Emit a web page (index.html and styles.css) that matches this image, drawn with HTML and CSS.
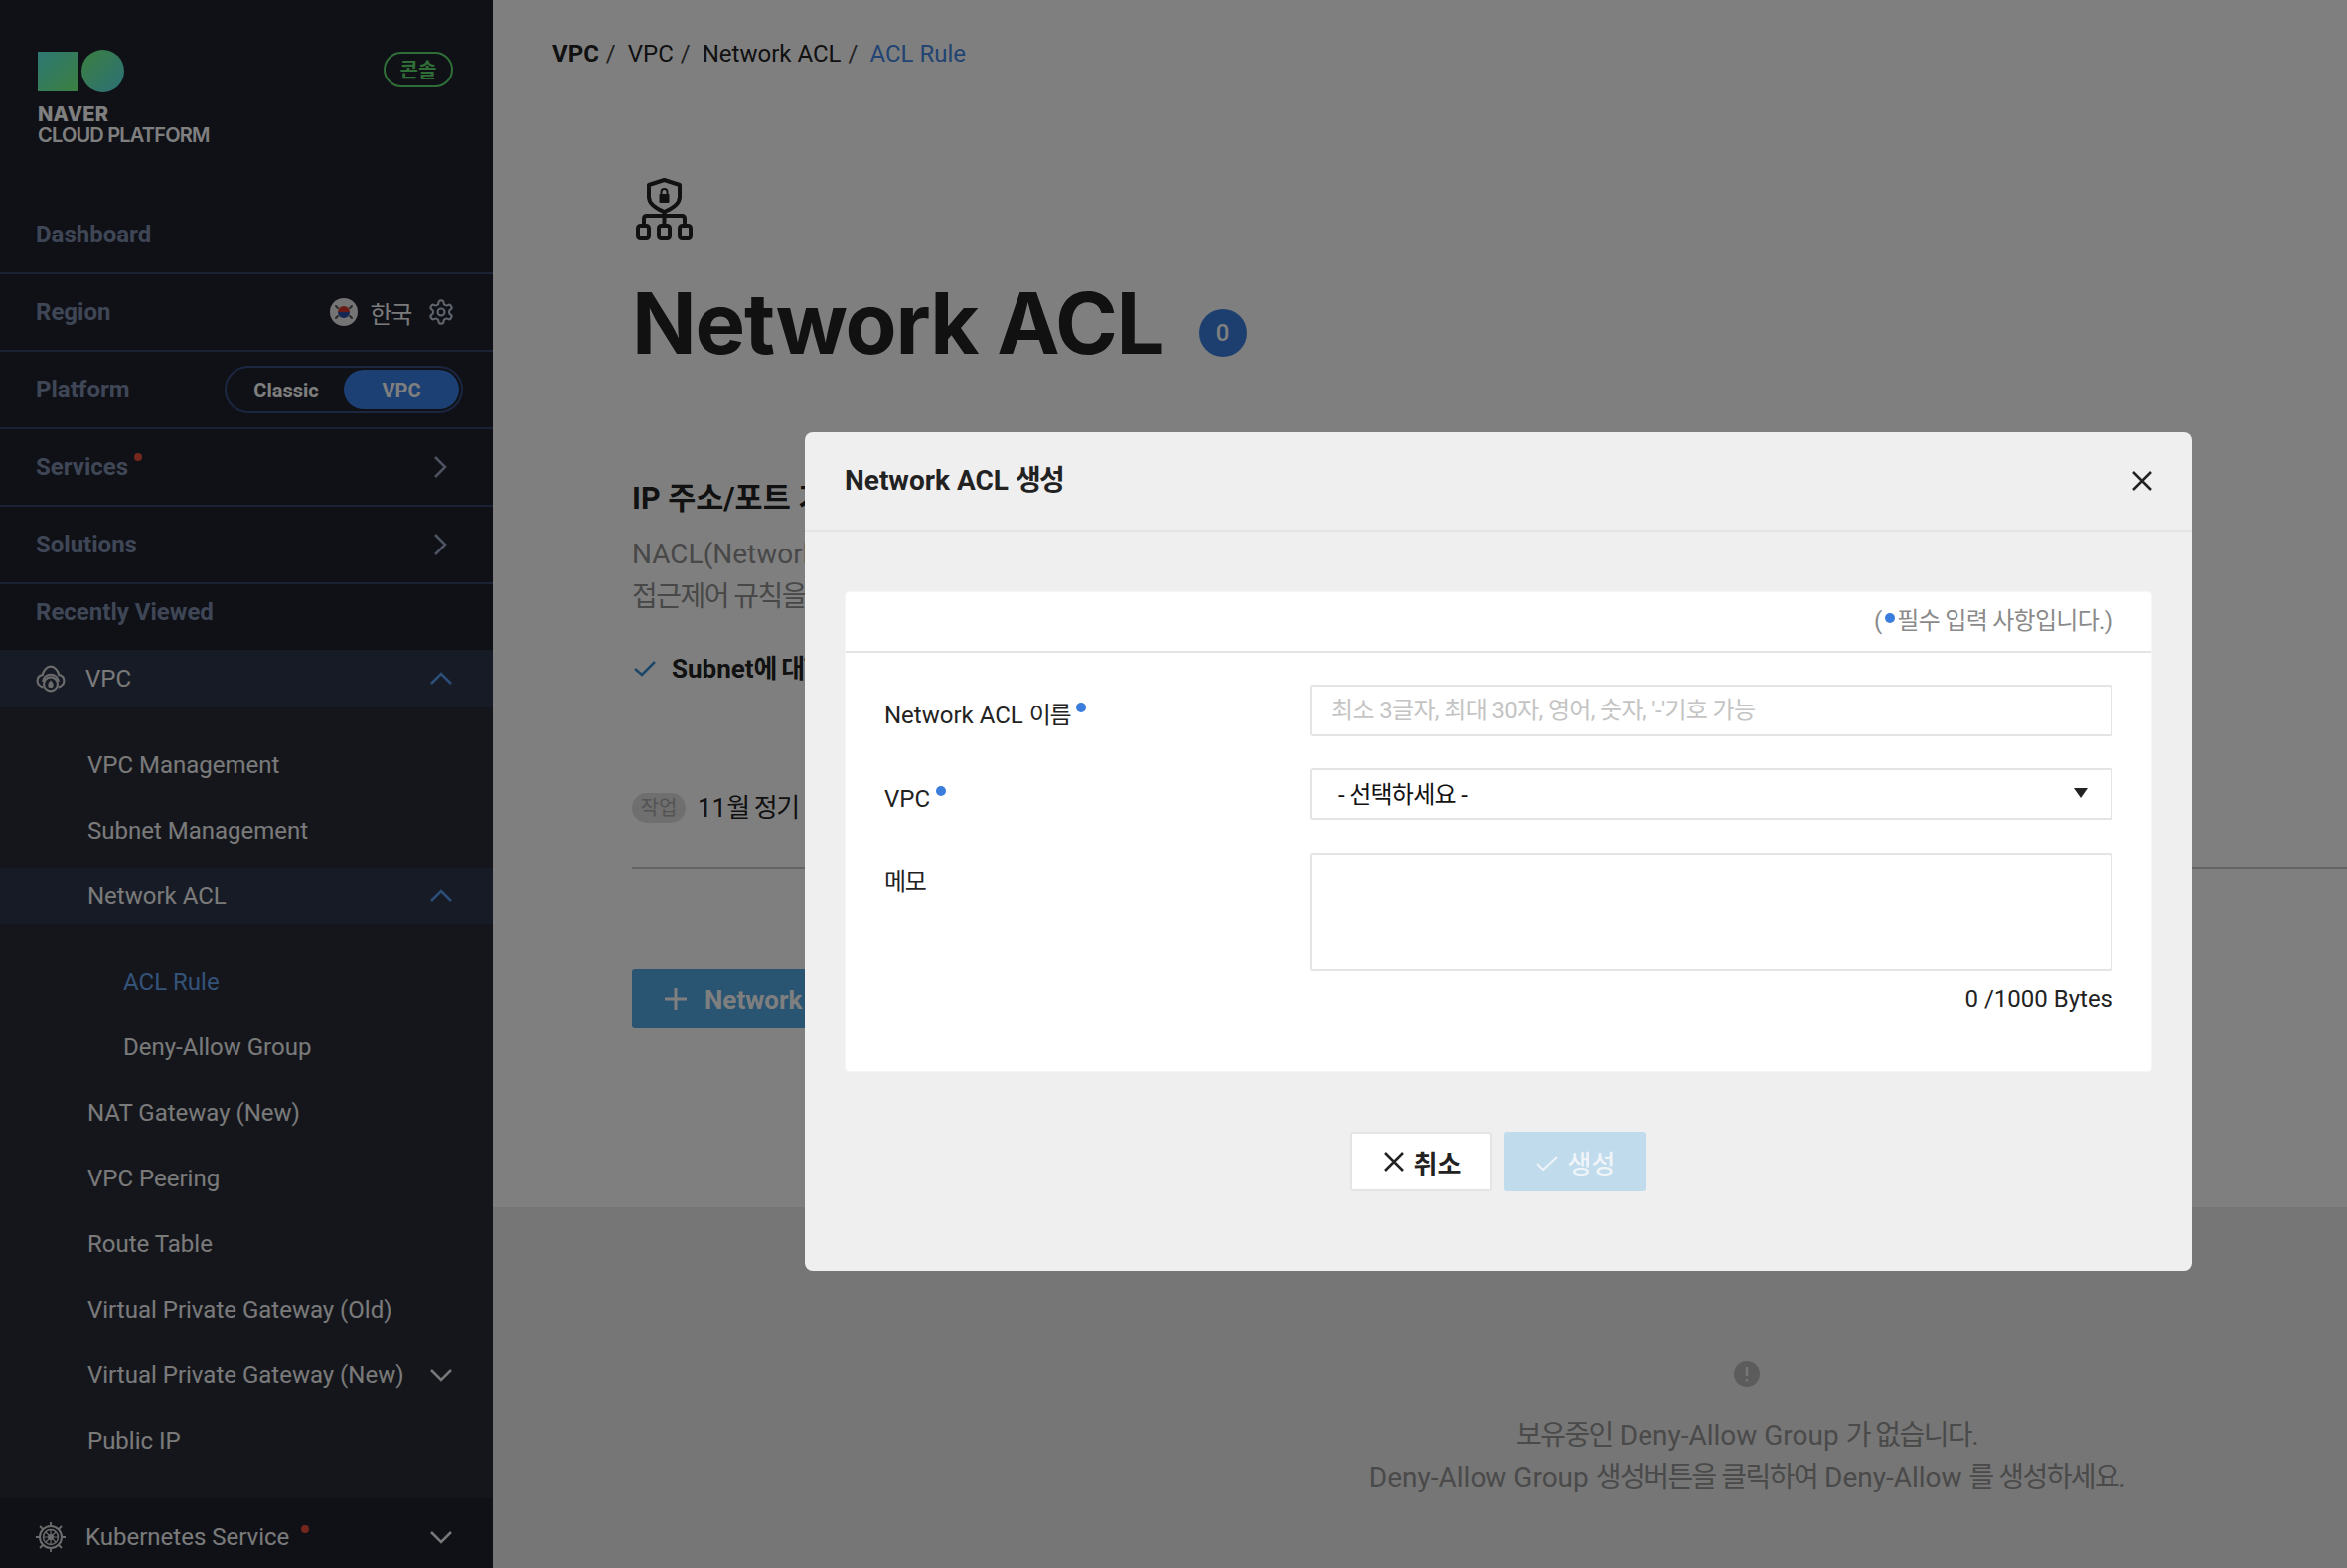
FILE: index.html
```html
<!DOCTYPE html>
<html lang="ko">
<head>
<meta charset="utf-8">
<title>Network ACL</title>
<link rel="stylesheet" href="styles.css">
</head>
<body>
<div class="app">
  <aside class="sidebar">
    <div class="brand">
      <div class="logo">
        <div class="logo-marks"><span class="logo-square"></span><span class="logo-circle"></span></div>
        <div class="logo-name">NAVER</div>
        <div class="logo-sub">CLOUD PLATFORM</div>
      </div>
      <span class="console-pill">콘솔</span>
    </div>
    <div class="nav-row">Dashboard</div>
    <div class="nav-row">
      <span>Region</span>
      <span class="region">
        <svg class="flag" viewBox="0 0 28 28"><circle cx="14" cy="14" r="14" fill="#e8e8e8"/><path d="M8 14a6 6 0 0 1 12 0z" fill="#d6362e"/><path d="M8 14a6 6 0 0 0 12 0z" fill="#2a4aa8"/><g stroke="#555" stroke-width="2" stroke-linecap="round"><path d="M6 8l2 2M22 8l-2 2M6 20l2-2M22 20l-2-2"/></g></svg>
        <span class="region-name ko">한국</span>
        <svg class="gear" viewBox="0 0 24 24" fill="none" stroke="currentColor" stroke-width="1.8"><path d="M12.22 2h-.44a2 2 0 0 0-2 2v.18a2 2 0 0 1-1 1.73l-.43.25a2 2 0 0 1-2 0l-.15-.08a2 2 0 0 0-2.73.73l-.22.38a2 2 0 0 0 .73 2.73l.15.1a2 2 0 0 1 1 1.72v.51a2 2 0 0 1-1 1.74l-.15.09a2 2 0 0 0-.73 2.73l.22.38a2 2 0 0 0 2.73.73l.15-.08a2 2 0 0 1 2 0l.43.25a2 2 0 0 1 1 1.73V20a2 2 0 0 0 2 2h.44a2 2 0 0 0 2-2v-.18a2 2 0 0 1 1-1.73l.43-.25a2 2 0 0 1 2 0l.15.08a2 2 0 0 0 2.73-.73l.22-.39a2 2 0 0 0-.73-2.73l-.15-.08a2 2 0 0 1-1-1.74v-.5a2 2 0 0 1 1-1.74l.15-.09a2 2 0 0 0 .73-2.73l-.22-.38a2 2 0 0 0-2.73-.73l-.15.08a2 2 0 0 1-2 0l-.43-.25a2 2 0 0 1-1-1.73V4a2 2 0 0 0-2-2z"/><circle cx="12" cy="12" r="3"/></svg>
      </span>
    </div>
    <div class="nav-row">
      <span>Platform</span>
      <span class="toggle"><span class="toggle-off">Classic</span><span class="toggle-on">VPC</span></span>
    </div>
    <div class="nav-row">
      <span class="with-dot">Services<i class="alert-dot"></i></span>
      <svg class="chev-right" viewBox="0 0 14 24"><path d="M2 2l10 10L2 22"/></svg>
    </div>
    <div class="nav-row">
      <span>Solutions</span>
      <svg class="chev-right" viewBox="0 0 14 24"><path d="M2 2l10 10L2 22"/></svg>
    </div>
    <div class="nav-row nav-recent">Recently Viewed</div>

    <div class="group-head">
      <svg class="group-icon" viewBox="0 0 28 26" fill="none" stroke="currentColor" stroke-width="2"><path d="M7 21C3.5 20.5 1.5 17.5 1.5 15c0-3 2-5.200 4.800-5.600C7 5 10.500 1.500 14 1.500S21 5 21.700 9.400C24.500 9.800 26.500 12 26.500 15c0 2.500-2 5.500-5.500 6"/><path d="M6.500 15.500C7.500 11.500 10.500 9 14 9s6.500 2.500 7.500 6.500"/><circle cx="14" cy="18" r="6.500"/><path d="M14 14.500c-1.500 1.500-2.500 3-2.500 4.500a2.500 2.500 0 0 0 5 0c0-1.500-1-3-2.500-4.500z" fill="currentColor" stroke="none"/></svg>
      <span class="group-name">VPC</span>
      <svg class="chev chev-blue" viewBox="0 0 22 14"><path d="M1 12l10-10 10 10"/></svg>
    </div>
    <div class="sublist">
      <div class="sub-item">VPC Management</div>
      <div class="sub-item">Subnet Management</div>
      <div class="sub-item sub-open"><span>Network ACL</span><svg class="chev chev-blue" viewBox="0 0 22 14"><path d="M1 12l10-10 10 10"/></svg></div>
      <div class="subsub">
        <div class="sub-item sub-deep sub-active">ACL Rule</div>
        <div class="sub-item sub-deep">Deny-Allow Group</div>
      </div>
      <div class="sub-item">NAT Gateway (New)</div>
      <div class="sub-item">VPC Peering</div>
      <div class="sub-item">Route Table</div>
      <div class="sub-item">Virtual Private Gateway (Old)</div>
      <div class="sub-item"><span>Virtual Private Gateway (New)</span><svg class="chev chev-grey" viewBox="0 0 22 14"><path d="M1 2l10 10L21 2"/></svg></div>
      <div class="sub-item">Public IP</div>
    </div>
    <div class="group-foot">
      <svg class="group-icon wheel" viewBox="0 0 30 30" fill="none" stroke="currentColor" stroke-width="2"><circle cx="15" cy="15" r="11"/><circle cx="15" cy="15" r="7.500" stroke-width="1.500"/><circle cx="15" cy="15" r="2"/><path d="M15 8v14M8 15h14M10 10l10 10M20 10L10 20" stroke-width="1.200"/><path d="M15 0v4M15 26v4M0 15h4M26 15h4M4 4l3 3M26 4l-3 3M4 26l3-3M26 26l-3-3" stroke-width="1.800"/></svg>
      <span class="group-name with-dot">Kubernetes Service<i class="alert-dot alert-far"></i></span>
      <svg class="chev chev-grey" viewBox="0 0 22 14"><path d="M1 2l10 10L21 2"/></svg>
    </div>
  </aside>

  <main class="main">
    <div class="main-top">
      <nav class="crumbs">
        <b class="crumb-strong">VPC</b><span class="crumb-sep">/</span>
        <span>VPC</span><span class="crumb-sep">/</span>
        <span>Network ACL</span><span class="crumb-sep">/</span>
        <span class="crumb-current">ACL Rule</span>
      </nav>
      <div class="content">
        <svg class="page-icon" viewBox="0 0 57 64" fill="none" stroke="currentColor" stroke-width="4" stroke-linejoin="round">
          <path d="M28.500 3L44 8v12c0 7-8 12-15.500 15C21 32 13 27 13 20V8z"/>
          <path d="M28.500 35v13M8 48v-6q0-3 3-3h35q3 0 3 3v6"/>
          <rect x="2" y="49" width="11" height="13" rx="2.500"/><rect x="23" y="49" width="11" height="13" rx="2.500"/><rect x="44" y="49" width="11" height="13" rx="2.500"/>
          <rect x="23.500" y="17" width="10" height="9" rx="1" fill="currentColor" stroke="none"/>
          <path d="M25.500 17v-2a3 3 0 0 1 6 0v2" stroke-width="2"/>
        </svg>
        <h1 class="page-title">Network ACL<span class="count">0</span></h1>
        <h2 class="section-title">IP 주소/포트 기반 접근제어</h2>
        <p class="section-desc">NACL(Network Access Control List)은 서브넷 단위로 적용되는 IP 주소/포트 기반의<br><span class="ko">접근제어 규칙을 설정할 수 있는 네트워크 방화벽입니다.</span></p>
        <div class="check-line">
          <svg class="check" viewBox="0 0 22 16" fill="none" stroke="currentColor" stroke-width="2.500"><path d="M1 8l7 6L21 1"/></svg>
          <span>Subnet<span class="ko">에 대한 접근 제어</span></span>
        </div>
        <div class="notice"><span class="tag">작업</span><span class="notice-text">11<span class="ko">월 정기 서버 점검 안내</span></span></div>
        <hr class="rule">
        <button class="primary-btn"><svg class="plus" viewBox="0 0 22 22" stroke="currentColor" stroke-width="3"><path d="M11 0v22M0 11h22"/></svg><span class="primary-label">Network ACL 생성</span></button>
      </div>
    </div>
    <section class="main-bottom">
      <svg class="empty-icon" viewBox="0 0 26 26"><circle cx="13" cy="13" r="13" fill="currentColor"/><path d="M13 6v9M13 18v2.500" stroke="#ececec" stroke-width="2.500"/></svg>
      <p class="empty-text"><span class="ko">보유중인</span> Deny-Allow Group <span class="ko">가 없습니다.</span><br>Deny-Allow Group <span class="ko">생성버튼을 클릭하여</span> Deny-Allow <span class="ko">를 생성하세요.</span></p>
    </section>
  </main>
</div>

<div class="overlay">
  <div class="modal">
    <header class="modal-head">
      <h3 class="modal-title">Network ACL <span class="ko">생성</span></h3>
      <svg class="modal-close" viewBox="0 0 20 20" stroke="currentColor" stroke-width="2.500"><path d="M1 1l18 18M19 1L1 19"/></svg>
    </header>
    <div class="modal-body">
      <div class="panel">
        <div class="panel-note">(<i class="req-dot note-dot"></i><span class="note-text">필수 입력 사항입니다.</span>)</div>
        <div class="form">
          <div class="form-row">
            <label class="form-label">Network ACL <span class="ko">이름</span><i class="req-dot"></i></label>
            <input class="field field-text" type="text" placeholder="최소 3글자, 최대 30자, 영어, 숫자, '-'기호 가능">
          </div>
          <div class="form-row form-row-vpc">
            <label class="form-label">VPC<i class="req-dot"></i></label>
            <div class="field select"><span class="select-text">- 선택하세요 -</span><i class="caret"></i></div>
          </div>
          <div class="form-row form-row-memo">
            <label class="form-label ko">메모</label>
            <div class="memo-col">
              <textarea class="field memo"></textarea>
              <div class="counter">0 /1000 Bytes</div>
            </div>
          </div>
        </div>
      </div>
      <div class="actions">
        <button class="btn btn-cancel"><svg class="btn-icon" viewBox="0 0 20 20" stroke="currentColor" stroke-width="2.500"><path d="M1 1l18 18M19 1L1 19"/></svg>취소</button>
        <button class="btn btn-create"><svg class="btn-icon" viewBox="0 0 22 16" fill="none" stroke="currentColor" stroke-width="2"><path d="M1 8l6 6L21 1"/></svg>생성</button>
      </div>
    </div>
  </div>
</div>
</body>
</html>
```
FILE: styles.css
```css
* { box-sizing: border-box; }
html, body { margin: 0; height: 100%; overflow: hidden; }
body { font-family: Roboto, "Noto Sans CJK KR", sans-serif; font-size: 24px; color: #222; background: #fff; }
.ko { letter-spacing: -.055em; }

.app { display: flex; height: 1578px; }

/* sidebar */
.sidebar { width: 496px; flex: none; display: flex; flex-direction: column; background: #1e222e; color: #f4f4f4; }
.brand { height: 198px; flex: none; display: flex; justify-content: space-between; align-items: flex-start; padding: 50px 40px 0 38px; }
.logo-marks { display: flex; align-items: center; gap: 4px; height: 43px; }
.logo-square { width: 40px; height: 40px; background: linear-gradient(135deg, #5cf0e8, #76ff80); }
.logo-circle { width: 43px; height: 43px; border-radius: 50%; background: linear-gradient(135deg, #76ff80, #58e0f0); }
.logo-name { margin-top: 12px; font: 800 20px/21px Inter, sans-serif; color: #fff; letter-spacing: .3px; }
.logo-sub { font: 600 20px/21px Inter, sans-serif; color: #fff; letter-spacing: -.8px; }
.console-pill { margin-top: 2px; width: 70px; height: 36px; border: 2px solid #5fdc6c; border-radius: 18px; color: #5fdc6c; font-weight: 700; font-size: 20px; line-height: 34px; text-align: center; }

.nav-row { height: 78px; flex: none; display: flex; align-items: center; justify-content: space-between; padding: 0 40px 0 36px; border-bottom: 2px solid #344466; font-weight: 700; color: #7e8cac; }
.nav-recent { height: 56px; border-bottom: 0; margin-bottom: 10px; }
.with-dot { position: relative; }
.alert-dot { position: absolute; left: 100%; top: 0; margin-left: 6px; width: 8px; height: 8px; border-radius: 50%; background: #e8503a; }
.alert-far { margin-left: 12px; top: 2px; }
.region { display: flex; align-items: center; color: #f4f4f4; font-weight: 400; }
.flag { width: 28px; height: 28px; }
.region-name { margin-left: 12px; }
.gear { width: 28px; height: 28px; margin-left: 16px; color: #c0c8d8; margin-right: -2px; }
.toggle { display: flex; align-items: center; width: 240px; height: 48px; margin-right: -10px; padding: 2px; border: 2px solid #364e80; border-radius: 24px; font-size: 20px; font-weight: 700; color: #fff; }
.toggle-off { width: 116px; height: 40px; line-height: 42px; text-align: center; }
.toggle-on { width: 116px; height: 40px; line-height: 42px; text-align: center; border-radius: 20px; background: #387ee8; }
.chev-right { width: 14px; height: 24px; margin-right: 6px; fill: none; stroke: #9aa6c0; stroke-width: 2.500; }

.group-head { height: 58px; flex: none; display: flex; align-items: center; padding: 0 41px 0 36px; background: #2e364c; }
.group-foot { flex: 1; display: flex; align-items: center; padding: 8px 41px 0 36px; }
.group-icon { width: 30px; height: 28px; color: #d8d8d8; flex: none; }
.wheel { height: 30px; }
.group-name { margin-left: 20px; margin-right: auto; }
.chev { width: 22px; height: 14px; fill: none; stroke-width: 2.500; flex: none; }
.chev-blue { stroke: #5a9cf0; }
.chev-grey { stroke: #f0f0f0; }

.sublist { flex: none; height: 796px; padding-top: 25px; background: #282c38; }
.sub-item { height: 66px; display: flex; align-items: center; justify-content: space-between; padding: 0 41px 0 88px; }
.sub-open { height: 56px; margin: 5px 0 4px; background: #2e364c; }
.subsub { padding-top: 21px; }
.sub-deep { padding-left: 124px; }
.sub-active { color: #6aa5f0; }

/* main */
.main { flex: 1; display: flex; flex-direction: column; min-width: 0; }
.main-top { height: 1215px; flex: none; }
.crumbs { padding: 37px 0 0 60px; display: flex; line-height: 34px; }
.crumb-strong { font-weight: 700; }
.crumb-sep { margin: 0 12px 0 7px; color: #444; }
.crumb-current { color: #4488e6; }
.content { padding-left: 140px; }
.page-icon { display: block; width: 57px; height: 64px; margin: 107px 0 0 4px; color: #222; }
.page-title { display: flex; align-items: center; margin: 34px 0 0; height: 100px; font: 700 85px/100px Inter, sans-serif; letter-spacing: -1.200px; color: #222; }
.count { margin: 18px 0 0 36px; width: 48px; height: 48px; border-radius: 50%; background: #3b7fdf; color: #fff; font: 500 24px/48px Roboto, sans-serif; letter-spacing: 0; text-align: center; }
.section-title { margin: 106px 0 0; font-size: 30.500px; font-weight: 700; line-height: 40px; white-space: nowrap; }
.section-desc { margin: 14px 0 0; font-size: 28px; line-height: 43px; color: #909090; white-space: nowrap; }
.check-line { display: flex; align-items: center; margin-top: 33px; font-size: 26px; font-weight: 700; line-height: 36px; white-space: nowrap; }
.check { width: 22px; height: 16px; margin: 0 16px 0 2px; color: #3b8fd0; flex: none; }
.notice { display: flex; align-items: center; margin-top: 107px; font-size: 26px; height: 30px; white-space: nowrap; }
.notice-text { position: relative; top: -3px; }
.tag { width: 54px; height: 30px; margin-right: 12px; border-radius: 15px; background: #dedede; color: #a8a8a8; font-size: 20px; line-height: 30px; text-align: center; }
.rule { margin: 45px 0 0; border: 0; border-top: 2px solid #c8c8c8; }
.primary-btn { display: flex; align-items: center; margin-top: 100px; width: 300px; height: 60px; padding: 0 0 0 33px; border: 0; border-radius: 3px; background: #52a8e4; color: #fff; font: 700 26px Roboto, "Noto Sans CJK KR", sans-serif; }
.plus { width: 22px; height: 22px; margin-right: 18px; }
.primary-label { position: relative; top: -2px; }
.main-bottom { flex: 1; padding: 155px 0 0 658px; background: #ececec; text-align: center; color: #949494; }
.empty-icon { display: block; width: 26px; height: 26px; margin: 0 auto; color: #b8b8b8; }
.empty-text { margin: 28px 0 0; font-size: 28px; line-height: 42px; }

/* modal */
.overlay { position: fixed; inset: 0; padding: 435px 0 0 810px; background: rgba(0, 0, 0, .5); }
.modal { width: 1396px; height: 844px; background: #efefef; border-radius: 8px; }
.modal-head { height: 100px; display: flex; align-items: center; justify-content: space-between; padding: 0 40px; border-bottom: 2px solid #e4e4e4; }
.modal-title { margin: 0; font-size: 28px; font-weight: 700; color: #222; padding-bottom: 7px; }
.modal-close { width: 20px; height: 20px; color: #222; }
.modal-body { padding: 60px 40px 0; }
.panel { height: 484px; background: #fff; border: 1px solid #f6f6f6; border-radius: 4px; }
.panel-note { height: 61px; padding: 0 39px; border-bottom: 2px solid #e4e4e4; text-align: right; line-height: 58px; color: #8a8a8a; }
.note-text { letter-spacing: -.03em; }
.req-dot { display: inline-block; width: 10px; height: 10px; border-radius: 50%; background: #3b7ddd; margin-left: 6px; vertical-align: 11px; }
.note-dot { margin: 0 2px 0 3px; vertical-align: 6px; }
.form { padding: 32px 39px 0; }
.form-row { display: flex; align-items: flex-start; margin-bottom: 32px; }
.form-row-vpc { margin-bottom: 33px; }
.form-row-memo { margin-bottom: 0; }
.form-label { width: 428px; flex: none; padding-top: 14px; line-height: 34px; color: #222; }
.field { display: block; width: 808px; height: 52px; padding: 0 20px; border: 2px solid #e4e4e4; border-radius: 3px; background: #fff; font: 24px Roboto, "Noto Sans CJK KR", sans-serif; color: #111; outline: 0; }
.field-text { letter-spacing: -.65px; }
.field::placeholder { color: #c4c4c4; }
.select { display: flex; align-items: center; justify-content: space-between; padding: 0 23px 0 27px; }
.select-text { position: relative; top: -2px; letter-spacing: -.03em; }
.caret { width: 0; height: 0; border-left: 7px solid transparent; border-right: 7px solid transparent; border-top: 10px solid #222; margin-top: -3px; }
.memo { height: 119px; resize: none; }
.memo-col { width: 808px; }
.counter { margin-top: 11px; text-align: right; line-height: 34px; color: #222; }
.form-row-memo .form-label { padding-top: 13px; }
.actions { display: flex; justify-content: center; gap: 12px; margin-top: 60px; }
.btn { display: flex; align-items: center; justify-content: center; width: 143px; height: 60px; border-radius: 3px; font: 700 26px Roboto, "Noto Sans CJK KR", sans-serif; }
.btn-cancel { background: #fff; border: 2px solid #e4e4e4; color: #222; }
.btn-create { background: #bfdbec; border: 0; color: #eef4f8; font-weight: 500; }
.btn-icon { width: 20px; height: 20px; margin-right: 10px; margin-left: 2px; }
.btn-create .btn-icon { width: 22px; height: 16px; margin: 4px 10px 0 0; }
```
